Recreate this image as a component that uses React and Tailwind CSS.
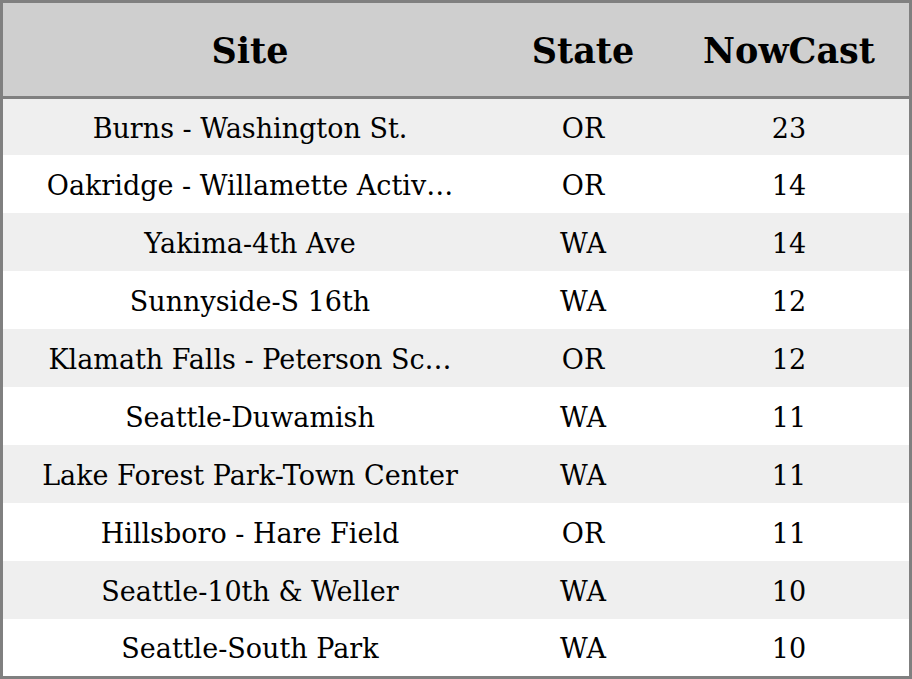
import React from 'react';

const rows = [
  { site: 'Burns - Washington St.', state: 'OR', nowcast: 23, h: 'h-[56px]' },
  { site: 'Oakridge - Willamette Activ…', state: 'OR', nowcast: 14 },
  { site: 'Yakima-4th Ave', state: 'WA', nowcast: 14 },
  { site: 'Sunnyside-S 16th', state: 'WA', nowcast: 12 },
  { site: 'Klamath Falls - Peterson Sc…', state: 'OR', nowcast: 12 },
  { site: 'Seattle-Duwamish', state: 'WA', nowcast: 11 },
  { site: 'Lake Forest Park-Town Center', state: 'WA', nowcast: 11 },
  { site: 'Hillsboro - Hare Field', state: 'OR', nowcast: 11 },
  { site: 'Seattle-10th & Weller', state: 'WA', nowcast: 10 },
  { site: 'Seattle-South Park', state: 'WA', nowcast: 10, h: 'h-[57px]' },
];

const App = () => {
  return (
    <div className="w-[912px] h-[679px] bg-white font-['DejaVu_Serif',serif] text-black">
      <div className="border-[3px] border-[#808080] h-full flex flex-col">
        {/* header */}
        <div className="grid grid-cols-[494px_172px_1fr] h-[96px] shrink-0 pt-[4px] bg-[#cfcfcf] border-b-[3px] border-[#808080] items-center text-center text-[35px] font-bold">
          <div>Site</div>
          <div>State</div>
          <div>NowCast</div>
        </div>

        {rows.map((r, i) => (
          <div
            key={i}
            className={`grid grid-cols-[494px_172px_1fr] shrink-0 pt-[4px] items-center text-center text-[27px] ${r.h || 'h-[58px]'} ${i % 2 === 0 ? 'bg-[#efefef]' : 'bg-white'}`}
          >
            <div className="whitespace-nowrap">{r.site}</div>
            <div>{r.state}</div>
            <div>{r.nowcast}</div>
          </div>
        ))}
      </div>
    </div>
  );
};

export default App;
